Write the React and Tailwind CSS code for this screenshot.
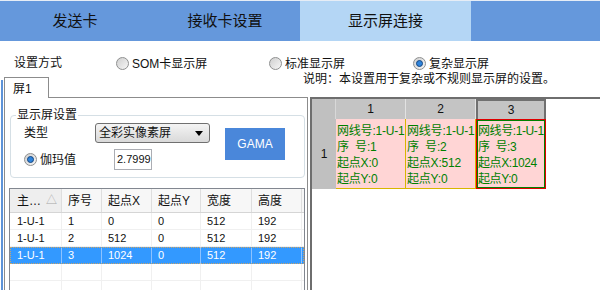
import React from "react";

const FONT = "font-['Liberation_Sans','Noto_Sans_CJK_SC',sans-serif]";

const COLS = [
  { w: "w-[52px]", pl: "pl-[7px]" },
  { w: "w-[40px]", pl: "pl-[6px]" },
  { w: "w-[50px]", pl: "pl-[6px]" },
  { w: "w-[49px]", pl: "pl-[6px]" },
  { w: "w-[51px]", pl: "pl-[6px]" },
  { w: "w-[50px]", pl: "pl-[6px]" },
];

const ROWS = [
  ["1-U-1", "1", "0", "0", "512", "192"],
  ["1-U-1", "2", "512", "0", "512", "192"],
  ["1-U-1", "3", "1024", "0", "512", "192"],
];

const CELLS = [
  { no: "1", x: "0" },
  { no: "2", x: "512" },
  { no: "3", x: "1024" },
];

function Radio({ checked }) {
  return (
    <span className="w-[13px] h-[13px] rounded-full border border-[#8e8f8f] bg-linear-to-br from-[#cfcfcf] to-[#f7f7f7] flex items-center justify-center shrink-0">
      {checked && <span className="w-[7px] h-[7px] rounded-full bg-[#2f84dc] border border-[#16467f]" />}
    </span>
  );
}

function CellText({ no, x, tight }) {
  return (
    <div className={`text-[12px] leading-[16px] text-[#008000] whitespace-nowrap ${tight ? "pt-[2px] tracking-[-0.4px]" : "pt-[4px] pl-[1px] tracking-[-0.2px]"}`}>
      <div>网线号:1-U-1</div>
      <div>序{"\u00a0\u00a0"}号:{no}</div>
      <div>起点X:{x}</div>
      <div>起点Y:0</div>
    </div>
  );
}

export default function App() {
  return (
    <div className={`w-[600px] h-[290px] bg-white overflow-hidden text-[#111] ${FONT}`}>
      {/* top tabs */}
      <div className="h-[41px] border-t border-[#e6edf6] bg-[#6598dc] flex text-[15px]">
        <div className="w-[150px] flex items-center justify-center">发送卡</div>
        <div className="w-[150px] flex items-center justify-center">接收卡设置</div>
        <div className="w-[171px] flex items-center justify-center bg-[#b4d6f5]">显示屏连接</div>
      </div>

      {/* mode radios */}
      <div className="h-[31px] pt-[14px] flex text-[12px] leading-[16px]">
        <div className="pl-[14px] w-[116px]">设置方式</div>
        <div className="w-[153px] flex items-center gap-[3px]"><Radio />SOM卡显示屏</div>
        <div className="w-[144px] flex items-center gap-[3px]"><Radio />标准显示屏</div>
        <div className="flex items-center gap-[3px]"><Radio checked />复杂显示屏</div>
      </div>

      <div className="flex">
        <div className="ml-[1px] w-[2px] mt-[8px] h-[210px] bg-[#5d93d8]" />
        <div className="ml-[1px] flex-1">
          {/* tab strip + note */}
          <div className="h-[25px] flex items-start">
            <div className="relative z-10 mt-[5px] h-[21px] w-[45px] border-l border-t border-r border-[#8c8c8c] bg-white pl-[8px] pt-[3px] text-[12px] leading-[16px]">屏1</div>
            <div className="ml-[254px] text-[12px] leading-[14px]">说明：本设置用于复杂或不规则显示屏的设置。</div>
          </div>

          <div className="flex h-[200px]">
            {/* left panel */}
            <div className="w-[304px] border-l border-t border-r border-[#8c8c8c]">
              <div className="relative ml-[5px] mt-[17px] w-[295px] h-[63px] rounded-[4px] border border-[#d5dfe5] text-[12px]">
                <span className="absolute -top-[8px] left-[5px] bg-white px-[1px] leading-[14px]">显示屏设置</span>
                <div className="flex pl-[13px]">
                  <div className="w-[186px] pt-[7px]">
                    <div className="flex items-center h-[20px]">
                      <span className="w-[71px]">类型</span>
                      <div className="w-[115px] h-[20px] rounded-[3px] border border-[#707070] bg-linear-to-b from-[#f4f4f4] to-[#d9d9d9] flex items-center pl-[3px]">
                        <span>全彩实像素屏</span>
                        <span className="ml-auto mr-[6px] w-0 h-0 border-l-[4px] border-r-[4px] border-t-[5px] border-l-transparent border-r-transparent border-t-black" />
                      </div>
                    </div>
                    <div className="flex items-center h-[21px] mt-[6px]">
                      <div className="w-[90px] flex items-center gap-[3px]"><Radio checked />伽玛值</div>
                      <div className="w-[38px] h-[21px] border border-[#abadb3] pl-[2px] flex items-center text-[11px]">2.7999</div>
                    </div>
                  </div>
                  <div className="ml-[15px] mt-[12px] w-[60px] h-[32px] bg-[#4a87da] text-white flex items-center justify-center">GAMA</div>
                </div>
              </div>

              {/* list */}
              <div className="ml-[4px] mt-[10px] w-[296px] h-[120px] border-l border-t border-r border-[#828790] text-[12px]">
                <div className="flex h-[24px] border-b border-[#d5d5d5] bg-[#f7f7f7]">
                  <div className="w-[52px] pl-[7px] flex items-center border-r border-[#dedede] bg-[#eeeeee]">
                    主…<span className="ml-[5px] text-[#a8a8a8] text-[11px]">△</span>
                  </div>
                  {["序号", "起点X", "起点Y", "宽度", "高度"].map((h, i) => (
                    <div key={h} className={`${COLS[i + 1].w} pl-[6px] flex items-center border-r border-[#dedede]`}>{h}</div>
                  ))}
                  <div className="flex-1" />
                </div>
                {ROWS.map((r, ri) => {
                  const sel = ri === 2;
                  return (
                    <div key={ri} className={`flex h-[17px] text-[11px] ${sel ? "bg-[#3399ff] text-white outline outline-dotted outline-[#c9a46a] -outline-offset-1" : "border-b border-[#f0f0f0]"}`}>
                      {r.map((v, ci) => (
                        <div key={ci} className={`${COLS[ci].w} ${COLS[ci].pl} flex items-center border-r ${sel ? "border-[#8cc2ff]" : "border-[#f0f0f0]"}`}>{v}</div>
                      ))}
                      <div className="flex-1" />
                    </div>
                  );
                })}
                {[0, 1].map((k) => (
                  <div key={k} className="flex h-[17px] border-b border-[#f0f0f0]">
                    {COLS.map((c, ci) => (
                      <div key={ci} className={`${c.w} border-r border-[#f0f0f0]`} />
                    ))}
                  </div>
                ))}
              </div>
            </div>

            {/* right grid panel */}
            <div className="ml-[2px] flex-1 border-l-2 border-t-2 border-[#6e6e6e] text-[12px]">
              <div className="flex h-[20px]">
                <div className="w-[24px] bg-[#c0c0c0] border-r border-[#d8d8d8]" />
                <div className="w-[70px] bg-[#c4c4c4] border-r border-[#e2e2e2] flex items-center justify-center">1</div>
                <div className="w-[70px] bg-[#c4c4c4] border-r border-[#e2e2e2] flex items-center justify-center">2</div>
                <div className="w-[70px] bg-[#c4c4c4] border-x-2 border-t-2 border-[#707070] flex items-center justify-center">3</div>
              </div>
              <div className="flex h-[70px]">
                <div className="w-[24px] bg-[#c0c0c0] flex items-center justify-center">1</div>
                <div className="w-[70px] bg-[#ffd5d5] border-r border-b border-[#d8b600]"><CellText {...CELLS[0]} /></div>
                <div className="w-[70px] bg-[#ffd5d5] border-r border-b border-[#d8b600]"><CellText {...CELLS[1]} /></div>
                <div className="w-[70px] border border-[#e00000]">
                  <div className="h-full bg-[#ffd5d5] border border-[#008000]"><CellText {...CELLS[2]} tight /></div>
                </div>
              </div>
            </div>
          </div>
        </div>
      </div>
    </div>
  );
}
